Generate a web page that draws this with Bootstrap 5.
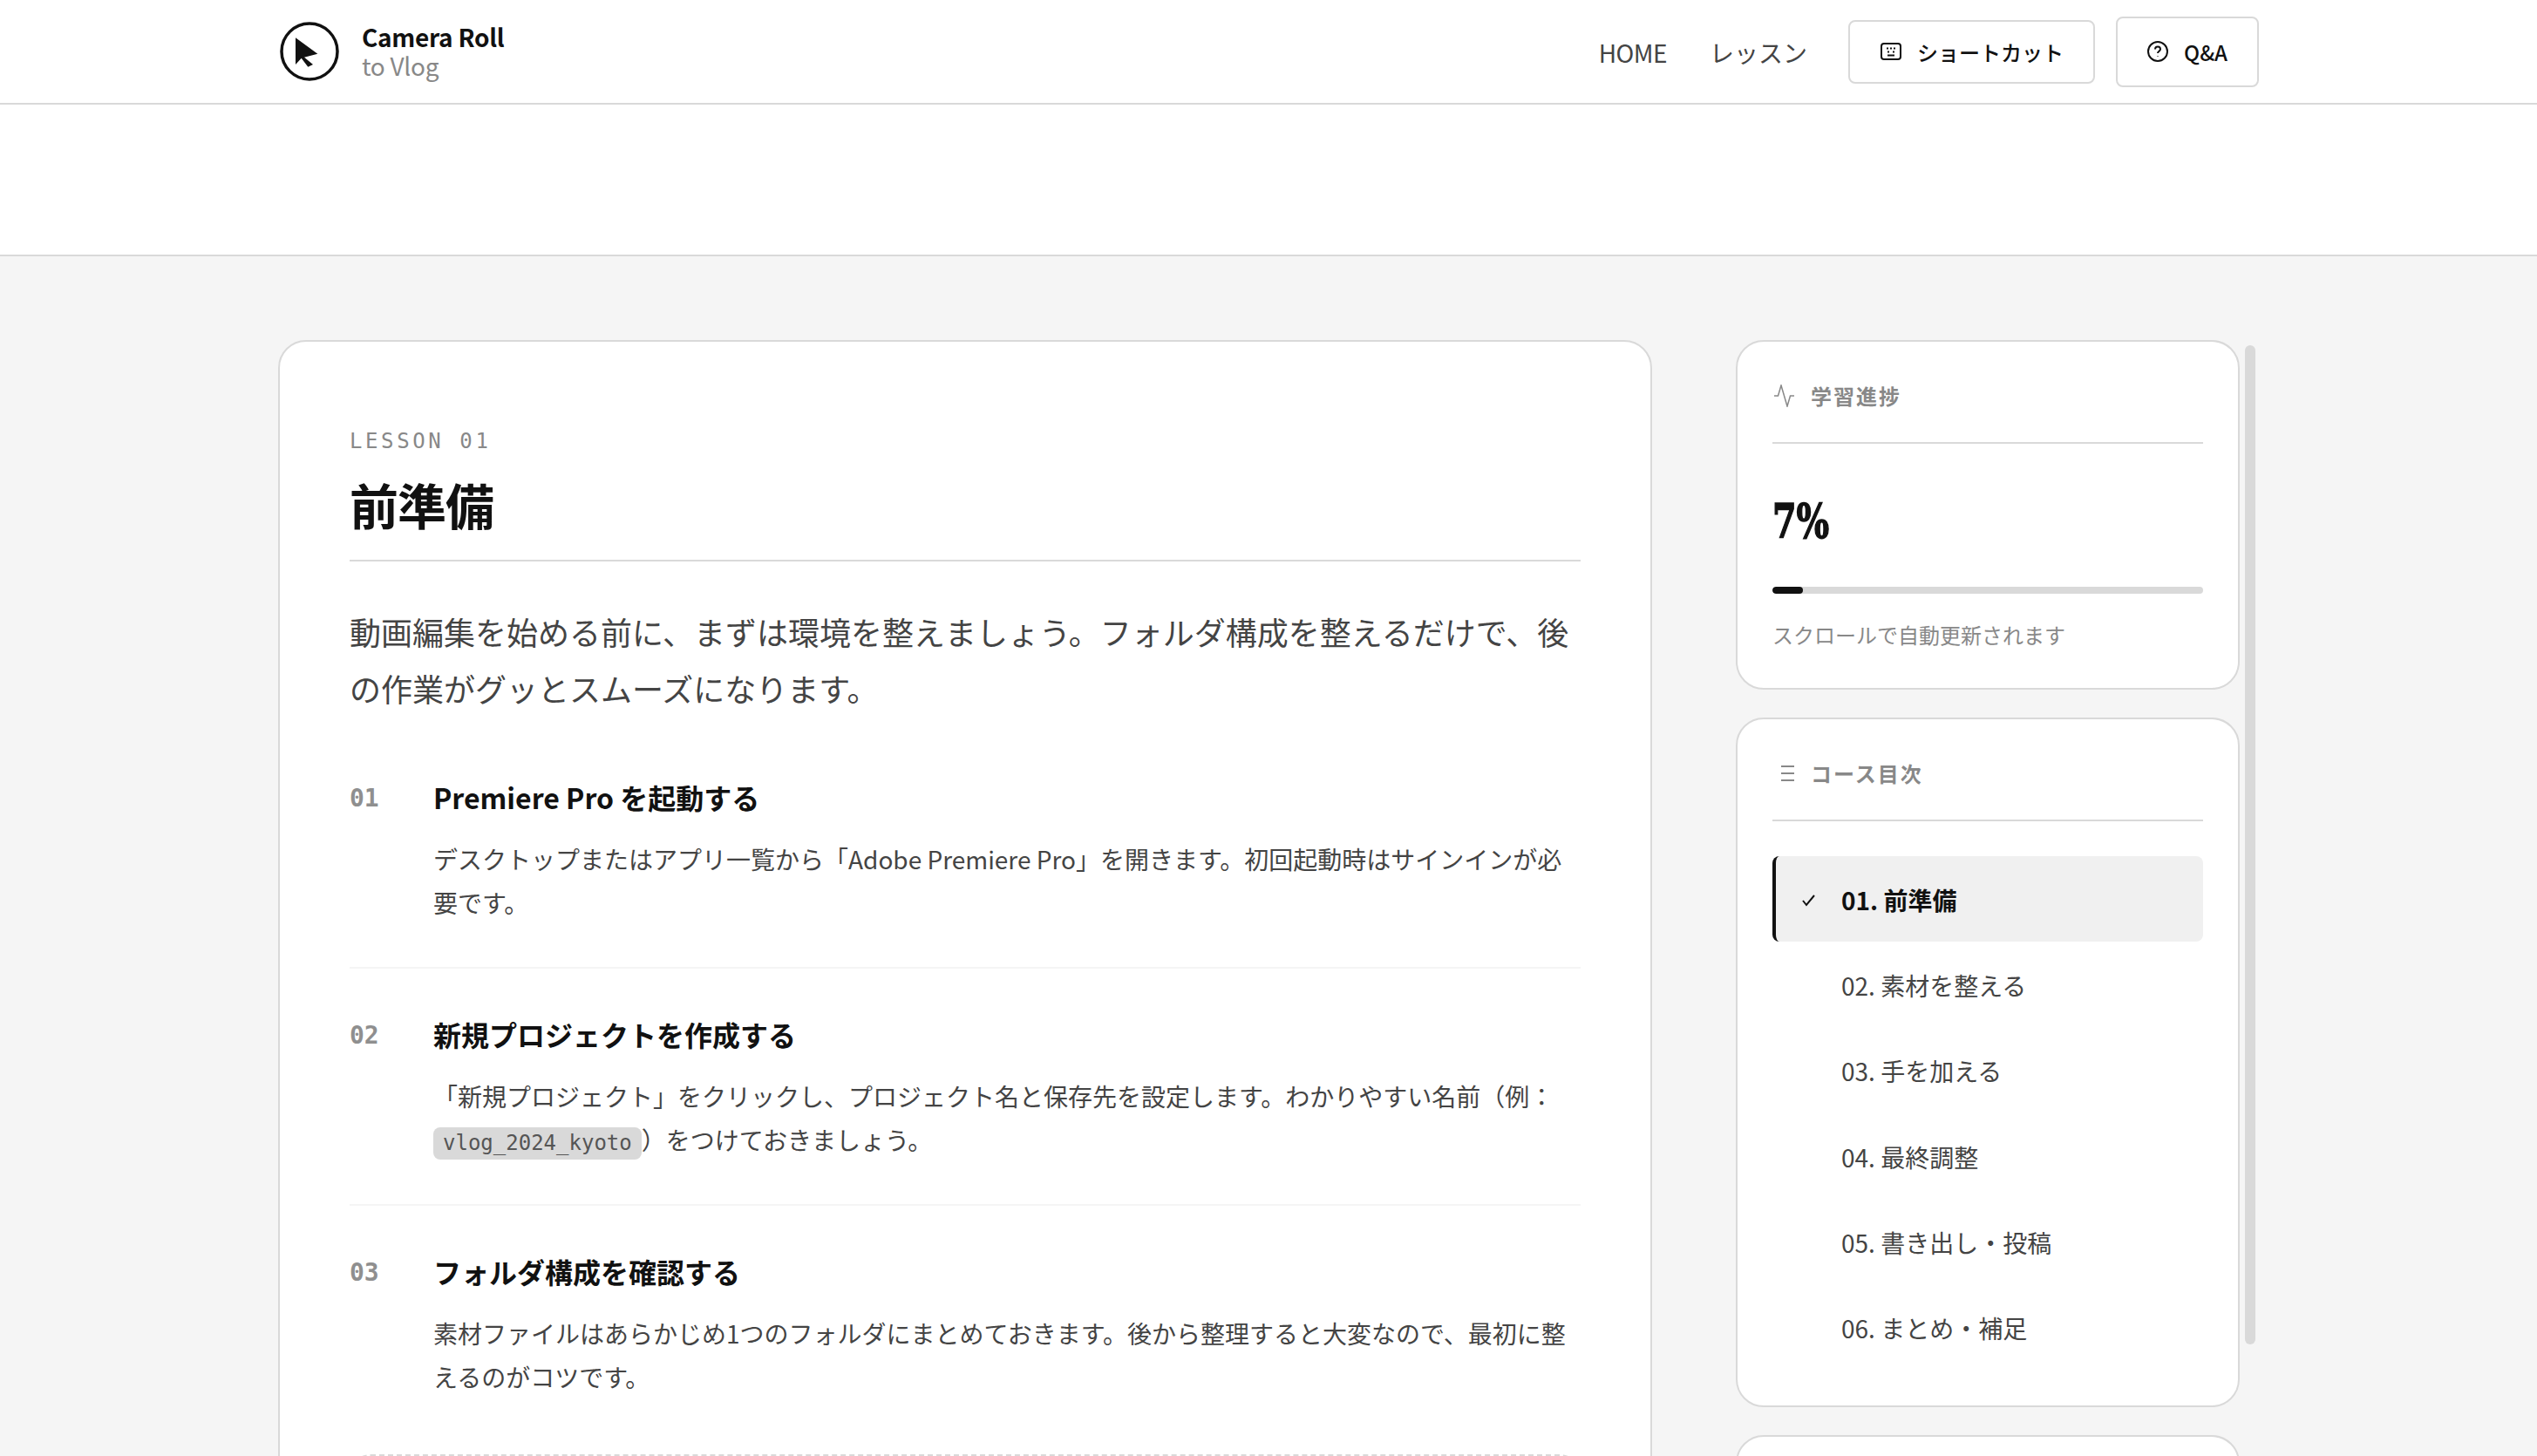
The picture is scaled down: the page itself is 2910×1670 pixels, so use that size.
<!DOCTYPE html>
<html lang="ja">
<head>
<meta charset="UTF-8">
<meta name="viewport" content="width=device-width, initial-scale=1.0">
<title>Camera Roll to Vlog</title>
<link href="https://cdn.jsdelivr.net/npm/bootstrap@5.3.0/dist/css/bootstrap.min.css" rel="stylesheet">
<style>
html, body { height: 100%; overflow: hidden; }
body { background: #f5f5f5; color: #444; font-family: "Noto Sans CJK JP", "Noto Sans", sans-serif; font-size: 28px; line-height: 1.8; }
.shell { width: 2272px; margin-left: 319px; }
.topbar { height: 120px; background: #fff; border-bottom: 2px solid #d9d9d9; }
.brand-name { font-size: 28px; line-height: 33px; font-weight: 600; letter-spacing: -.28px; color: #111; }
.brand-sub { font-size: 28px; line-height: 33px; letter-spacing: -.28px; color: #888; }
.brand-mark { width: 68px; height: 68px; margin: 0 26px 0 2px; }
.top-link { color: #444; text-decoration: none; font-size: 28px; margin-right: 47px; padding-top: 2px; }
.top-link.home { letter-spacing: -.5px; margin-right: 49px; }
.top-btn { border: 2px solid #d9d9d9; border-radius: 8px; background: #fff; color: #111; font-size: 24px; font-weight: 500; padding: 13px 34px 13px 35px; line-height: 43px; gap: 18px; }
.top-btn.tall { padding: 17px 34px; margin-left: 24px; }
.banner { height: 174px; background: #fff; border-bottom: 2px solid #d9d9d9; }
.page-body { padding-top: 96px; gap: 96px; }
.lesson { width: 1576px; flex: none; background: #fff; border: 2px solid #d9d9d9; border-radius: 32px; padding: 96px 80px 80px; }
.eyebrow { font-family: "DejaVu Sans Mono", "Liberation Mono", monospace; font-size: 24px; line-height: 36px; letter-spacing: 3.6px; color: #888; margin-bottom: 18px; }
.lesson-title { font-size: 56px; line-height: 72px; font-weight: 700; letter-spacing: -1px; color: #111; margin: 0; padding-bottom: 28px; border-bottom: 2px solid #d9d9d9; }
.intro { font-size: 36px; line-height: 65px; margin: 48px 0 68px; }
.step { gap: 52px; padding-bottom: 48px; margin-bottom: 51px; border-bottom: 2px solid #f5f5f5; }
.step:last-child { border-bottom: 0; }
.step-no { width: 44px; flex: none; font-family: "DejaVu Sans Mono", "Liberation Mono", monospace; font-size: 28px; font-weight: 700; line-height: 48px; padding-top: 2px; color: #8f8f8f; }
.step-title { font-size: 32px; line-height: 48px; font-weight: 700; color: #111; margin: 0 0 22px; }
.step-text { margin: 0; }
.code-chip { font-family: "DejaVu Sans Mono", "Liberation Mono", monospace; font-size: 24px; line-height: 37px; display: inline-block; background: #d9d9d9; color: #555; border-radius: 8px; padding: 0 11px; }
.tree-box { height: 300px; margin: 64px 0 0 -96px; border: 2px dashed #d9d9d9; border-radius: 24px; }
.side-wrap { width: 596px; flex: none; }
.side { width: 578px; height: 1280px; overflow: hidden; }
.side-thumb { left: 584px; top: 6px; width: 12px; height: 1146px; background: #d9d9d9; border-radius: 6px; }
.side-card { background: #fff; border: 2px solid #d9d9d9; border-radius: 32px; padding: 40px; margin-bottom: 32px; }
.side-head { font-size: 24px; line-height: 43px; font-weight: 700; letter-spacing: 2px; color: #888; padding-bottom: 32px; border-bottom: 2px solid #d9d9d9; gap: 18px; }
.side-head svg { width: 26px; height: 26px; flex: none; }
.pct { font-family: "DejaVu Serif", serif; font-stretch: condensed; font-size: 55px; line-height: 67px; font-weight: 700; color: #111; -webkit-text-stroke: 1.5px #111; margin: 55px 0 42px; transform: scaleX(.8); transform-origin: left; }
.meter { height: 8px; background: #d9d9d9; border-radius: 4px; overflow: hidden; margin-bottom: 25px; }
.meter-fill { height: 100%; background: #111; border-radius: 4px; }
.side-note { font-size: 24px; line-height: 43px; color: #888; }
.toc { margin-top: 40px; }
.toc-item { border-left: 4px solid transparent; border-radius: 8px; padding: 24.500px 0 23.500px 24px; color: #444; }
.toc-item.on { border-left-color: #111; background: #f0f0f0; color: #111; font-weight: 700; }
.toc-check { width: 26px; height: 26px; margin-right: 25px; flex: none; }
.stub { height: 158px; }
</style>
</head>
<body>

<header class="topbar">
    <div class="shell d-flex align-items-center h-100">
        <svg class="brand-mark" viewBox="0 0 68 68">
            <circle cx="34" cy="34" r="32" fill="none" stroke="#111" stroke-width="3.5"/>
            <path d="M18 18.300 43.300 36.700 28 40.700 38 49 32.300 51.700 24.700 41.700 18 49Z" fill="#111"/>
        </svg>
        <div>
            <div class="brand-name">Camera Roll</div>
            <div class="brand-sub">to Vlog</div>
        </div>
        <nav class="d-flex align-items-center ms-auto">
            <a class="top-link home" href="#">HOME</a>
            <a class="top-link" href="#">レッスン</a>
            <button class="top-btn d-flex align-items-center">
                <svg width="24" height="20" viewBox="0 0 24 20" fill="none" stroke="#111" stroke-width="2"><rect x="1" y="1" width="22" height="18" rx="3"/><path d="M7 6.500h2M11 6.500h2M15 6.500h2M8 10.500h2M14 10.500h2M8 14.500h8"/></svg>
                ショートカット
            </button>
            <button class="top-btn tall d-flex align-items-center">
                <svg width="24" height="24" viewBox="0 0 24 24" fill="none" stroke="#111" stroke-width="2"><circle cx="12" cy="12" r="11"/><path d="M9 9.500a3 3 0 0 1 6 0c0 2-3 2.400-3 4.500M12 17.500v.5"/></svg>
                Q&amp;A
            </button>
        </nav>
    </div>
</header>

<div class="banner"></div>

<div class="shell d-flex align-items-start page-body">
    <main class="lesson">
        <div class="eyebrow">LESSON 01</div>
        <h1 class="lesson-title">前準備</h1>
        <p class="intro">動画編集を始める前に、まずは環境を整えましょう。フォルダ構成を整えるだけで、後の作業がグッとスムーズになります。</p>

        <div class="step d-flex">
            <div class="step-no">01</div>
            <div>
                <h2 class="step-title">Premiere Pro を起動する</h2>
                <p class="step-text">デスクトップまたはアプリ一覧から「Adobe Premiere Pro」を開きます。初回起動時はサインインが必要です。</p>
            </div>
        </div>
        <div class="step d-flex">
            <div class="step-no">02</div>
            <div>
                <h2 class="step-title">新規プロジェクトを作成する</h2>
                <p class="step-text">「新規プロジェクト」をクリックし、プロジェクト名と保存先を設定します。わかりやすい名前（例：<span class="code-chip">vlog_2024_kyoto</span>）をつけておきましょう。</p>
            </div>
        </div>
        <div class="step d-flex">
            <div class="step-no">03</div>
            <div>
                <h2 class="step-title">フォルダ構成を確認する</h2>
                <p class="step-text">素材ファイルはあらかじめ1つのフォルダにまとめておきます。後から整理すると大変なので、最初に整えるのがコツです。</p>
                <div class="tree-box"></div>
            </div>
        </div>
    </main>

    <div class="side-wrap position-relative">
        <aside class="side">
            <section class="side-card">
                <div class="side-head d-flex align-items-center">
                    <svg viewBox="0 0 26 26" fill="none" stroke="#888" stroke-width="1.5"><path d="M2 13h4.500L10 1l7 24 3.500-12H25"/></svg>
                    学習進捗
                </div>
                <div class="pct">7%</div>
                <div class="meter"><div class="meter-fill" style="width: 7%"></div></div>
                <div class="side-note">スクロールで自動更新されます</div>
            </section>

            <section class="side-card">
                <div class="side-head d-flex align-items-center">
                    <svg viewBox="0 0 26 26" fill="none" stroke="#888" stroke-width="2"><path d="M10 5h15M10 13h15M10 21h15"/></svg>
                    コース目次
                </div>
                <div class="toc">
                    <div class="toc-item on d-flex align-items-center">
                        <svg class="toc-check" viewBox="0 0 26 26" fill="none" stroke="#111" stroke-width="2"><path d="M7 14l4 5 9-11"/></svg>
                        01. 前準備
                    </div>
                    <div class="toc-item d-flex align-items-center"><span class="toc-check"></span>02. 素材を整える</div>
                    <div class="toc-item d-flex align-items-center"><span class="toc-check"></span>03. 手を加える</div>
                    <div class="toc-item d-flex align-items-center"><span class="toc-check"></span>04. 最終調整</div>
                    <div class="toc-item d-flex align-items-center"><span class="toc-check"></span>05. 書き出し・投稿</div>
                    <div class="toc-item d-flex align-items-center"><span class="toc-check"></span>06. まとめ・補足</div>
                </div>
            </section>

            <section class="side-card stub mb-0"></section>
        </aside>
        <div class="side-thumb position-absolute"></div>
    </div>
</div>

<script src="https://cdn.jsdelivr.net/npm/bootstrap@5.3.0/dist/js/bootstrap.bundle.min.js"></script>
</body>
</html>
